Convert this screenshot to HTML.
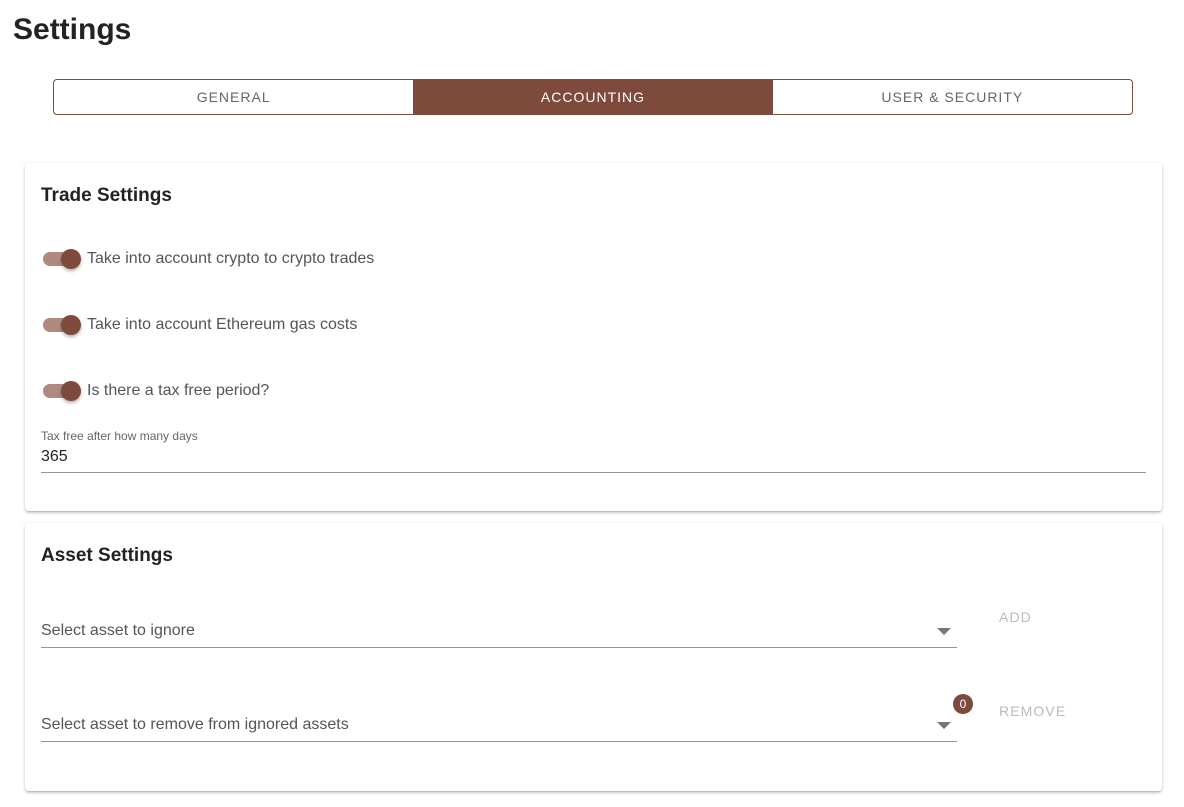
<!DOCTYPE html>
<html><head><style>
*{box-sizing:border-box;margin:0;padding:0}
body{width:1184px;height:807px;background:#fff;font-family:"Liberation Sans",sans-serif;position:relative;overflow:hidden;color:rgba(0,0,0,.87)}
.abs{position:absolute}
h1{position:absolute;left:13px;top:13px;font-size:30px;font-weight:bold;color:#222}
.tabs{position:absolute;left:53px;top:79px;width:1080px;height:36px;border:1px solid #7e4a3b;border-radius:4px;display:flex;overflow:hidden}
.tabs div{flex:1;text-align:center;line-height:34px;font-size:14px;letter-spacing:1px;color:#666}
.tabs .on{background:#7e4a3b;color:#fff}
.card{position:absolute;left:25px;width:1137px;background:#fff;border-radius:4px;box-shadow:0 2px 2px rgba(0,0,0,.14),0 1px 5px rgba(0,0,0,.12),0 3px 1px -2px rgba(0,0,0,.1)}
.card h2{position:absolute;left:16px;font-size:19px;font-weight:bold;color:#222}
.sw{position:absolute;left:18px;width:36px;height:14px;border-radius:7px;background:#b08a80}
.sw:after{content:"";position:absolute;left:18px;top:-3px;width:20px;height:20px;border-radius:50%;background:#7e4a3b;box-shadow:0 2px 3px rgba(0,0,0,.3)}
.lbl{position:absolute;left:62px;font-size:16px;color:#555}
.line{position:absolute;height:1px;background:#949494}
.arrow{position:absolute;width:0;height:0;border-left:7px solid transparent;border-right:7px solid transparent;border-top:7px solid #777}
.btn{position:absolute;font-size:14px;letter-spacing:1.1px;color:#bbb}
</style></head><body>
<h1>Settings</h1>
<div class="tabs"><div>GENERAL</div><div class="on">ACCOUNTING</div><div>USER &amp; SECURITY</div></div>
<div class="card" style="top:163px;height:348px">
<h2 style="top:22px">Trade Settings</h2>
<div class="sw" style="top:89px"></div><div class="lbl" style="top:87px">Take into account crypto to crypto trades</div>
<div class="sw" style="top:155px"></div><div class="lbl" style="top:153px">Take into account Ethereum gas costs</div>
<div class="sw" style="top:221px"></div><div class="lbl" style="top:219px">Is there a tax free period?</div>
<div class="abs" style="left:16px;top:266px;font-size:12px;color:#666">Tax free after how many days</div>
<div class="abs" style="left:16px;top:285px;font-size:16px;color:#222">365</div>
<div class="line" style="left:16px;top:309px;width:1105px"></div>
</div>
<div class="card" style="top:523px;height:268px">
<h2 style="top:22px">Asset Settings</h2>
<div class="abs" style="left:16px;top:99px;font-size:16px;color:#555">Select asset to ignore</div>
<div class="arrow" style="left:912px;top:105px"></div>
<div class="line" style="left:16px;top:124px;width:916px"></div>
<div class="btn" style="left:974px;top:86px">ADD</div>
<div class="abs" style="left:16px;top:193px;font-size:16px;color:#555">Select asset to remove from ignored assets</div>
<div class="arrow" style="left:912px;top:199px"></div>
<div class="line" style="left:16px;top:218px;width:916px"></div>
<div class="abs" style="left:928px;top:171px;width:20px;height:20px;border-radius:50%;background:#7e4a3b;color:#fff;font-size:12px;text-align:center;line-height:20px">0</div>
<div class="btn" style="left:974px;top:180px">REMOVE</div>
</div>
</body></html>
